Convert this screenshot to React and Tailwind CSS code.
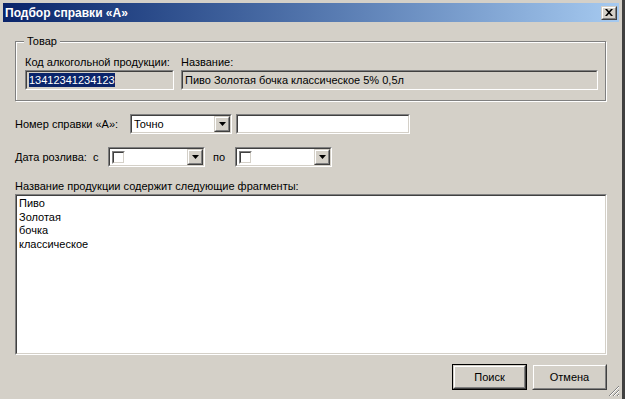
import React from 'react';

const font = { fontFamily: '"Liberation Sans", Arial, sans-serif' };

function Sunken({ className = '', inner = '', children }) {
  return (
    <div className={`border border-t-[#808080] border-l-[#808080] border-r-white border-b-white ${className}`}>
      <div className={`h-full border border-t-[#404040] border-l-[#404040] border-r-[#d4d0c8] border-b-[#d4d0c8] ${inner}`}>
        {children}
      </div>
    </div>
  );
}

function Raised({ className = '', inner = '', children }) {
  return (
    <div className={`border border-t-[#d4d0c8] border-l-[#d4d0c8] border-r-[#404040] border-b-[#404040] bg-[#d4d0c8] ${className}`}>
      <div className={`h-full border border-t-white border-l-white border-r-[#808080] border-b-[#808080] ${inner}`}>
        {children}
      </div>
    </div>
  );
}

function DropButton() {
  return (
    <Raised className="w-[16px] h-full" inner="flex items-center justify-center">
      <svg width="7" height="4" viewBox="0 0 7 4">
        <path d="M0 0h7L3.5 4z" fill="#000" />
      </svg>
    </Raised>
  );
}

function Combo({ width, value }) {
  return (
    <Sunken className={`${width} h-[20px]`} inner="flex bg-white">
      <div className="flex-1 flex items-center pl-[2px] text-[11px] text-black">{value}</div>
      <DropButton />
    </Sunken>
  );
}

function DatePicker({ width }) {
  return (
    <Sunken className={`${width} h-[20px]`} inner="flex bg-white">
      <div className="flex-1 flex items-center pl-[2px]">
        <div className="w-[13px] h-[13px] border border-t-[#808080] border-l-[#808080] border-r-white border-b-white">
          <div className="h-full border border-t-[#404040] border-l-[#404040] border-r-[#d4d0c8] border-b-[#d4d0c8] bg-white" />
        </div>
      </div>
      <DropButton />
    </Sunken>
  );
}

function PushButton({ label, isDefault = false }) {
  const btn = (
    <Raised className="h-full" inner="flex items-center justify-center text-[11px] text-black">
      {label}
    </Raised>
  );
  return (
    <div className={`w-[75px] h-[26px] ${isDefault ? 'border border-black' : ''}`}>{btn}</div>
  );
}

export default function App() {
  return (
    <div className="w-[625px] h-[399px] bg-[#d4d0c8] overflow-hidden relative select-none" style={font}>
      <div className="h-full pl-[3px] pt-[3px] pr-[1px] border-r-[3px] border-r-[#404040] flex flex-col">
        <div className="w-[616px] flex flex-col h-full">
          {/* title bar */}
          <div className="h-[19px] flex items-center justify-between bg-gradient-to-r from-[#0a246a] to-[#a6caf0] pl-[2px] pr-[2px]">
            <span className="text-white font-bold text-[12px] leading-none">Подбор справки «А»</span>
            <Raised className="w-[16px] h-[14px]" inner="flex items-center justify-center">
              <svg width="8" height="7" viewBox="0 0 8 7">
                <path d="M0 0h2l2 2.2L6 0h2L5 3.5 8 7H6L4 4.8 2 7H0l3-3.5z" fill="#000" />
              </svg>
            </Raised>
          </div>

          {/* body */}
          <div className="flex flex-col pl-[12px] pr-[10px] text-[11px] text-black">
            {/* group box */}
            <div className="relative mt-[19px] w-[591px] border border-[#808080] shadow-[inset_1px_1px_0_#fff,1px_1px_0_#fff] pt-[13px] pl-[9px] pr-[7px] pb-[10px]">
              <span className="absolute -top-[8px] left-[8px] bg-[#d4d0c8] px-[3px] leading-[14px]">Товар</span>
              <div className="flex gap-[7px]">
                <div className="flex flex-col w-[149px]">
                  <span className="leading-[14px]">Код алкогольной продукции:</span>
                  <Sunken className="h-[20px] mt-[1px]" inner="bg-[#d4d0c8] flex items-center pl-[2px]">
                    <span className="bg-[#0a246a] text-white leading-[14px]">13412341234123</span>
                  </Sunken>
                </div>
                <div className="flex flex-col flex-1">
                  <span className="leading-[14px]">Название:</span>
                  <Sunken className="h-[20px] mt-[1px]" inner="bg-[#d4d0c8] flex items-center pl-[2px]">
                    <span className="leading-[14px]">Пиво Золотая бочка классическое 5% 0,5л</span>
                  </Sunken>
                </div>
              </div>
            </div>

            {/* number row */}
            <div className="flex items-center mt-[13px] h-[20px]">
              <span className="w-[115px]">Номер справки «А»:</span>
              <Combo width="w-[102px]" value="Точно" />
              <Sunken className="w-[174px] h-[20px] ml-[4px]" inner="bg-white" />
            </div>

            {/* date row */}
            <div className="flex items-center mt-[13px] h-[20px]">
              <span className="w-[93px]">Дата розлива:&nbsp; с</span>
              <DatePicker width="w-[97px]" />
              <span className="w-[30px] pl-[8px]">по</span>
              <DatePicker width="w-[97px]" />
            </div>

            {/* fragments */}
            <span className="mt-[12px] leading-[14px]">Название продукции содержит следующие фрагменты:</span>
            <Sunken className="h-[161px] w-[592px] mt-[1px]" inner="bg-white pl-[2px] pt-[1px] leading-[13.5px]">
              <div>Пиво</div>
              <div>Золотая</div>
              <div>бочка</div>
              <div>классическое</div>
            </Sunken>

            {/* buttons */}
            <div className="flex justify-end gap-[5px] mt-[9px] w-[592px]">
              <PushButton label="Поиск" isDefault />
              <PushButton label="Отмена" />
            </div>
          </div>
        </div>
      </div>

      {/* resize grip */}
      <svg className="absolute right-[5px] bottom-[2px]" width="12" height="12" viewBox="0 0 12 12">
        <path d="M11 1L1 11M11 5L5 11M11 9L9 11" stroke="#808080" strokeWidth="1" />
        <path d="M11 2L2 11M11 6L6 11M11 10L10 11" stroke="#ffffff" strokeWidth="1" />
      </svg>
    </div>
  );
}
